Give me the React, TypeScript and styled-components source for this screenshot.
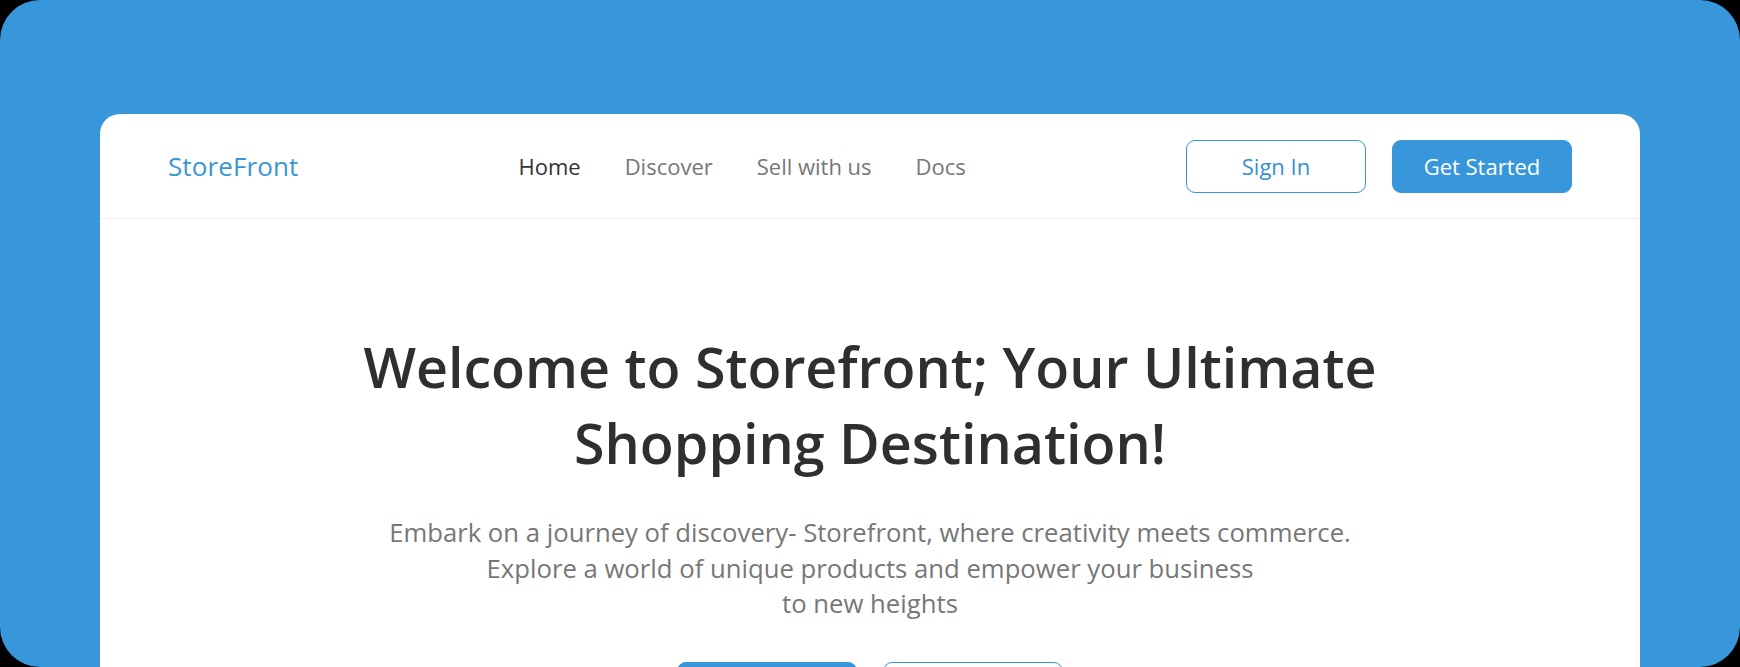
import React from "react";
import styled, { createGlobalStyle } from "styled-components";

const GlobalStyle = createGlobalStyle`
  html, body {
    margin: 0;
    padding: 0;
    background: #000;
  }
  * {
    box-sizing: border-box;
  }
  body {
    font-family: "Open Sans", "Liberation Sans", sans-serif;
  }
`;

const Frame = styled.div`
  width: 1740px;
  height: 667px;
  background: #3797da;
  border-radius: 40px;
  overflow: hidden;
  padding: 114px 100px 0;
`;

const Card = styled.div`
  background: #ffffff;
  border-radius: 20px 20px 0 0;
  min-height: 700px;
`;

const Header = styled.header`
  height: 105px;
  display: flex;
  align-items: center;
  justify-content: space-between;
  padding: 0 68px;
  border-bottom: 1px solid #eeeeee;
`;

const Logo = styled.div`
  font-size: 26px;
  font-weight: 500;
  color: #3a95d3;
  letter-spacing: 0.1px;
`;

const Nav = styled.nav`
  display: flex;
  gap: 44px;
`;

const NavLink = styled.a<{ $active?: boolean }>`
  font-size: 22px;
  font-weight: 500;
  color: ${(p) => (p.$active ? "#333333" : "#777777")};
  text-decoration: none;
  cursor: pointer;
`;

const Actions = styled.div`
  display: flex;
  gap: 26px;
`;

const Button = styled.button<{ $variant?: "solid" | "outline" }>`
  width: 180px;
  height: 53px;
  border-radius: 9px;
  font-family: inherit;
  font-size: 22px;
  font-weight: 500;
  cursor: pointer;
  border: 1px solid #3797da;
  background: ${(p) => (p.$variant === "solid" ? "#3797da" : "#ffffff")};
  color: ${(p) => (p.$variant === "solid" ? "#ffffff" : "#3a8fcf")};
`;

const Hero = styled.section`
  display: flex;
  flex-direction: column;
  align-items: center;
  text-align: center;
  padding-top: 110px;
`;

const Title = styled.h1`
  margin: 0;
  font-size: 55.6px;
  font-weight: 600;
  line-height: 76px;
  color: #2f2f2f;
`;

const Lead = styled.p`
  margin: 34px 0 0;
  font-size: 25.7px;
  line-height: 35.5px;
  color: #777777;
`;

const HeroActions = styled.div`
  display: flex;
  gap: 26px;
  margin-top: 40px;
`;

export default function App() {
  return (
    <>
      <GlobalStyle />
      <Frame>
        <Card>
          <Header>
            <Logo>StoreFront</Logo>
            <Nav>
              <NavLink $active>Home</NavLink>
              <NavLink>Discover</NavLink>
              <NavLink>Sell with us</NavLink>
              <NavLink>Docs</NavLink>
            </Nav>
            <Actions>
              <Button $variant="outline">Sign In</Button>
              <Button $variant="solid">Get Started</Button>
            </Actions>
          </Header>
          <Hero>
            <Title>
              Welcome to Storefront; Your Ultimate
              <br />
              Shopping Destination!
            </Title>
            <Lead>
              Embark on a journey of discovery- Storefront, where creativity meets commerce.
              <br />
              Explore a world of unique products and empower your business
              <br />
              to new heights
            </Lead>
            <HeroActions>
              <Button $variant="solid">Shop Now</Button>
              <Button $variant="outline">Learn More</Button>
            </HeroActions>
          </Hero>
        </Card>
      </Frame>
    </>
  );
}
